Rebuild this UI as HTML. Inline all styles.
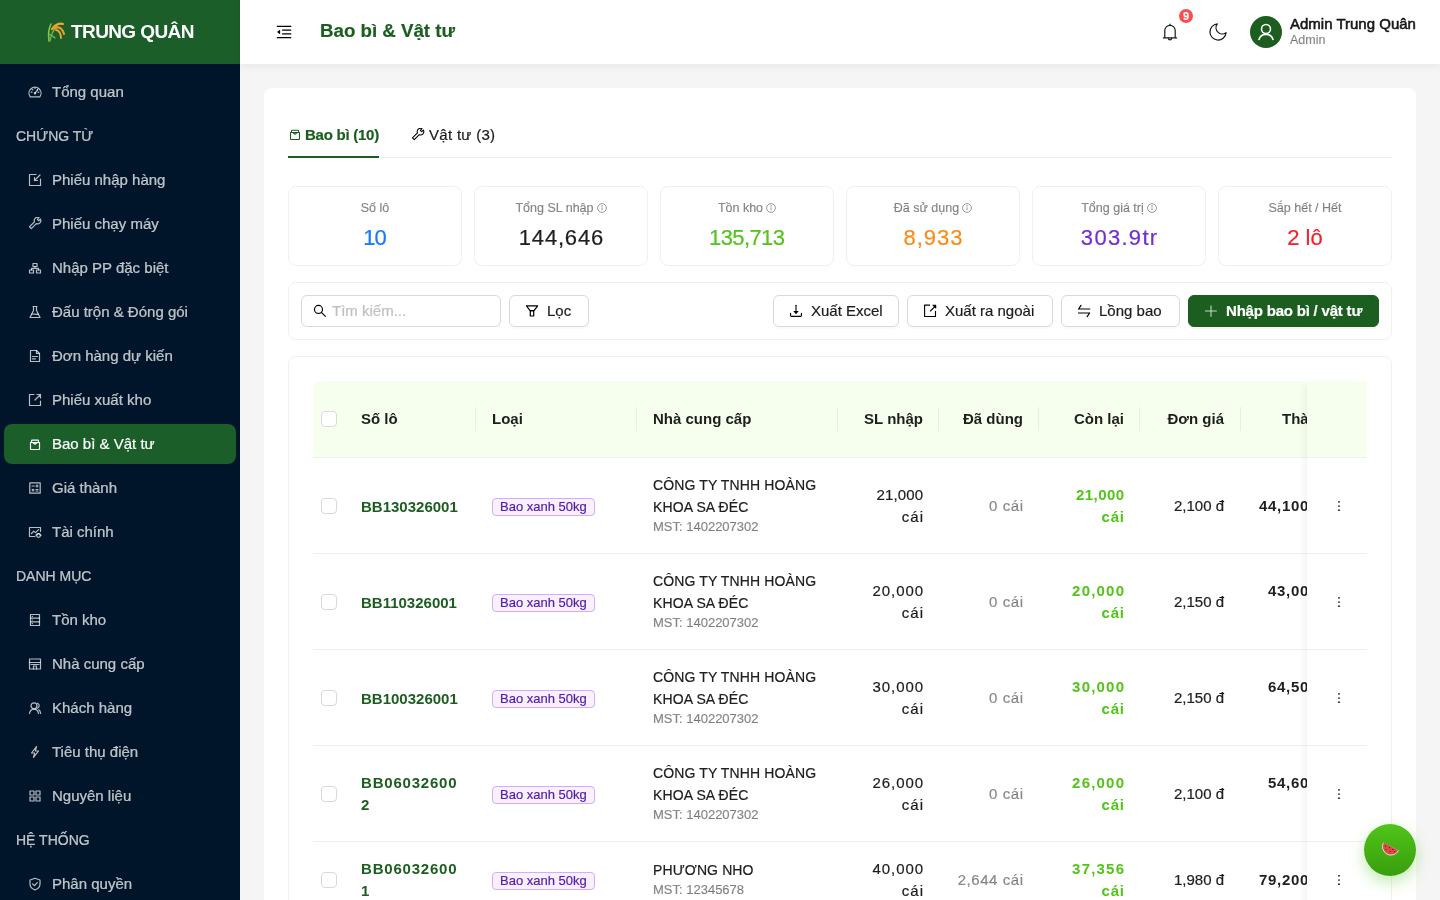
<!DOCTYPE html>
<html lang="vi"><head><meta charset="utf-8"><title>Bao bì &amp; Vật tư</title>
<style>
*{box-sizing:border-box;margin:0;padding:0}
html,body{width:1440px;height:900px;overflow:hidden;background:#f5f5f5;font-family:"Liberation Sans",sans-serif;color:rgba(0,0,0,0.88)}
body{-webkit-text-stroke-width:0.2px}
.bold,.lot,.grn,.th,#logo .t{-webkit-text-stroke-width:0}
.a{position:absolute}
svg{display:block}
#sider{position:absolute;left:0;top:0;width:240px;height:900px;background:#001529;overflow:hidden}
#logo{position:absolute;left:0;top:0;width:240px;height:64px;background:#1b5e2a}
#logo .t{position:absolute;left:71px;top:20px;font-size:19px;font-weight:bold;color:#fff;line-height:24px;white-space:nowrap;letter-spacing:-0.6px}
.mi{position:absolute;left:4px;width:232px;height:40px;border-radius:8px;color:rgba(255,255,255,0.72)}
.mi.sel{background:#1b5e2a;color:#fff}
.mi .mic{position:absolute;left:24px;top:13px;width:14px;height:14px}
.mi .mt{position:absolute;left:48px;top:0;line-height:40px;font-size:15px;white-space:nowrap}
.mg{position:absolute;left:16px;height:40px;line-height:40px;font-size:14px;color:rgba(255,255,255,0.72);white-space:nowrap}
#header{position:absolute;left:240px;top:0;width:1200px;height:64px;background:#fff;box-shadow:0 2px 8px rgba(0,0,0,0.06)}
#card{position:absolute;left:264px;top:88px;width:1152px;height:840px;background:#fff;border-radius:8px}
.tab{position:absolute;top:123px;height:24px;line-height:24px;font-size:15px;white-space:nowrap}
.stat{position:absolute;top:186px;width:174px;height:80px;border:1px solid #f0f0f0;border-radius:8px;text-align:center}
.stat .l{position:absolute;left:0;right:0;top:13px;font-size:12.5px;line-height:16px;color:rgba(0,0,0,0.45);white-space:nowrap}
.stat .v{position:absolute;left:0;right:0;top:37px;font-size:22px;line-height:28px;white-space:nowrap}
.info{display:inline-block;vertical-align:-1px;margin-left:3px}
.box{position:absolute;border:1px solid #f0f0f0;border-radius:8px;background:#fff}
.btn{position:absolute;top:295px;height:32px;border:1px solid #d9d9d9;border-radius:6px;background:#fff;box-shadow:0 2px 0 rgba(0,0,0,0.02);font-size:15px;line-height:30px;white-space:nowrap;color:rgba(0,0,0,0.88)}
.btn .ic{position:absolute;top:8px;width:14px;height:14px}
.btn .tx{position:absolute;top:0}
.th{position:absolute;font-size:15px;font-weight:bold;line-height:22px;white-space:nowrap;color:rgba(0,0,0,0.88)}
.sep{position:absolute;top:407px;width:1px;height:24px;background:#e8eee2}
.cb{position:absolute;width:16px;height:16px;border:1px solid #d9d9d9;border-radius:4px;background:#fff}
.rowline{position:absolute;left:313px;width:994px;height:1px;background:#f0f0f0}
.c{position:absolute;font-size:15px;line-height:22px;white-space:nowrap}
.r{text-align:right}
.lot{color:#1b5e20;font-weight:bold}
.tag{position:absolute;left:492px;height:18px;padding:0 7px;border:1px solid #d3adf7;background:#f9f0ff;color:#531dab;border-radius:4px;font-size:13px;line-height:16px;white-space:nowrap}
.sup{font-size:14px;letter-spacing:0.12px}
.mst{position:absolute;font-size:13px;line-height:16px;color:rgba(0,0,0,0.45);white-space:nowrap}
.gray{color:rgba(0,0,0,0.45)}
.grn{color:#52c41a;font-weight:bold}
.bold{font-weight:bold}
.dots{position:absolute;left:1337px;width:4px}
.tot{letter-spacing:0.7px}
</style></head>
<body>
<div id="root" style="position:absolute;left:0;top:0;width:1440px;height:900px;will-change:transform">
<div id="sider">
<div id="logo">
<svg class="a" style="left:46px;top:20px" width="22" height="22" viewBox="0 0 22 22" fill="none" stroke-linecap="round">
<path d="M3 21 C2 14 3 8 5 4" stroke="#8bc34a" stroke-width="1.6"/>
<path d="M4 21 C5 15 7 10 11 6" stroke="#7cb342" stroke-width="1.4"/>
<path d="M6 9 C9 4 14 3 17 4" stroke="#f0a830" stroke-width="2.2"/>
<path d="M9 8 C13 6 17 9 18 14" stroke="#e89a2a" stroke-width="2.2"/>
<path d="M10 10 C13 10 15 14 15 18" stroke="#f0a830" stroke-width="1.8"/>
<path d="M3 14 C5 15 7 16 9 18" stroke="#66bb6a" stroke-width="1.2"/>
</svg>
<div class="t">TRUNG QUÂN</div>
</div>
<div class="mi" style="top:72px"><span class="mic"><svg width="14" height="14" viewBox="0 0 14 14" stroke="currentColor" fill="none" stroke-width="1.2" stroke-linecap="round" stroke-linejoin="round"><path d="M2.2 11.8 A6 6 0 1 1 11.8 11.8 Z"/><path d="M7 8.2 L9.6 4.8"/><circle cx="7" cy="8.3" r="0.6"/><path d="M7 2.6v0.8M3.2 7.2h0.8M10 7.2h0.8M4.3 4.4l0.5 0.5M9.7 4.4l-0.5 0.5"/></svg></span><span class="mt">Tổng quan</span></div>
<div class="mg" style="top:116px">CHỨNG TỪ</div>
<div class="mi" style="top:160px"><span class="mic"><svg width="14" height="14" viewBox="0 0 14 14" stroke="currentColor" fill="none" stroke-width="1.2" stroke-linecap="round" stroke-linejoin="round"><path d="M8 1.5H1.5v11h11V6"/><path d="M12 2 L6.5 7.5M6.5 4.5v3h3"/></svg></span><span class="mt">Phiếu nhập hàng</span></div>
<div class="mi" style="top:204px"><span class="mic"><svg width="14" height="14" viewBox="0 0 14 14" stroke="currentColor" fill="none" stroke-width="1.2" stroke-linecap="round" stroke-linejoin="round"><path d="M6.46 4.8L1.48 9.78L3.32 11.62L8.3 6.64A3.3 3.3 0 0 0 12.44 2.08L10.77 3.74L9.36 2.33L11.02 0.66A3.3 3.3 0 0 0 6.46 4.8Z"/></svg></span><span class="mt">Phiếu chạy máy</span></div>
<div class="mi" style="top:248px"><span class="mic"><svg width="14" height="14" viewBox="0 0 14 14" stroke="currentColor" fill="none" stroke-width="1.2" stroke-linecap="round" stroke-linejoin="round"><rect x="5" y="2.5" width="4" height="3"/><rect x="1.5" y="9" width="4" height="3"/><rect x="8.5" y="9" width="4" height="3"/><path d="M7 5.5v1.8M3.5 9V7.3h7V9"/></svg></span><span class="mt">Nhập PP đặc biệt</span></div>
<div class="mi" style="top:292px"><span class="mic"><svg width="14" height="14" viewBox="0 0 14 14" stroke="currentColor" fill="none" stroke-width="1.2" stroke-linecap="round" stroke-linejoin="round"><path d="M5 1.5h4M5.5 1.5v4L2 12.5h10L8.5 5.5v-4"/><path d="M3.6 9.2c2-0.8 4.5 0.6 6.8 0"/></svg></span><span class="mt">Đấu trộn &amp; Đóng gói</span></div>
<div class="mi" style="top:336px"><span class="mic"><svg width="14" height="14" viewBox="0 0 14 14" stroke="currentColor" fill="none" stroke-width="1.2" stroke-linecap="round" stroke-linejoin="round"><path d="M2.5 1.5h6l3 3v8h-9z"/><path d="M8.5 1.5v3h3M4.5 7.5h5M4.5 9.8h3"/></svg></span><span class="mt">Đơn hàng dự kiến</span></div>
<div class="mi" style="top:380px"><span class="mic"><svg width="14" height="14" viewBox="0 0 14 14" stroke="currentColor" fill="none" stroke-width="1.2" stroke-linecap="round" stroke-linejoin="round"><path d="M6 1.5H1.5v11h11V8"/><path d="M7 7 L12.5 1.5M9 1.5h3.5V5"/></svg></span><span class="mt">Phiếu xuất kho</span></div>
<div class="mi sel" style="top:424px"><span class="mic"><svg width="14" height="14" viewBox="-1 -1 14 14" stroke="currentColor" fill="none" stroke-width="1.2" stroke-linecap="round" stroke-linejoin="round"><path d="M2.5 4.5V2.9a0.7 0.7 0 0 1 0.7-0.7h5.6a0.7 0.7 0 0 1 0.7 0.7v1.6M1.5 4.5h9v6.3a0.7 0.7 0 0 1-0.7 0.7H2.2a0.7 0.7 0 0 1-0.7-0.7zM3.7 4.6l2.3 1.6 2.3-1.6"/></svg></span><span class="mt">Bao bì &amp; Vật tư</span></div>
<div class="mi" style="top:468px"><span class="mic"><svg width="14" height="14" viewBox="0 0 14 14" stroke="currentColor" fill="none" stroke-width="1.2" stroke-linecap="round" stroke-linejoin="round"><rect x="1.8" y="1.8" width="10.4" height="10.4"/><path d="M4 5h2.2M9 3.9v2.2M7.9 5h2.2M4.2 8.3l1.6 1.6M5.8 8.3l-1.6 1.6M8 8.5h2M8 10h2"/></svg></span><span class="mt">Giá thành</span></div>
<div class="mi" style="top:512px"><span class="mic"><svg width="14" height="14" viewBox="0 0 14 14" stroke="currentColor" fill="none" stroke-width="1.2" stroke-linecap="round" stroke-linejoin="round"><path d="M7 11.5H1.5v-9h11v4"/><path d="M3.5 8.5l2.2-2.4 1.8 1.5 3-3"/><circle cx="10.5" cy="10.5" r="1.8"/><path d="M8 10.5c1.5-2.4 3.5-2.4 5 0"/></svg></span><span class="mt">Tài chính</span></div>
<div class="mg" style="top:556px">DANH MỤC</div>
<div class="mi" style="top:600px"><span class="mic"><svg width="14" height="14" viewBox="0 0 14 14" stroke="currentColor" fill="none" stroke-width="1.2" stroke-linecap="round" stroke-linejoin="round"><rect x="2.5" y="1.5" width="9" height="11"/><path d="M2.5 5.2h9M2.5 8.8h9M4.3 3.4h0.1M4.3 7h0.1M4.3 10.6h0.1"/></svg></span><span class="mt">Tồn kho</span></div>
<div class="mi" style="top:644px"><span class="mic"><svg width="14" height="14" viewBox="0 0 14 14" stroke="currentColor" fill="none" stroke-width="1.2" stroke-linecap="round" stroke-linejoin="round"><path d="M1.5 2h11v10h-11z"/><path d="M1.5 5.5h11M5.5 12V9h3v3M3 7.5h8"/></svg></span><span class="mt">Nhà cung cấp</span></div>
<div class="mi" style="top:688px"><span class="mic"><svg width="14" height="14" viewBox="0 0 14 14" stroke="currentColor" fill="none" stroke-width="1.2" stroke-linecap="round" stroke-linejoin="round"><circle cx="6" cy="4.8" r="3"/><path d="M1.5 12.5c0.5-2.8 2.3-4.3 4.5-4.3s4 1.5 4.5 4.3"/><path d="M9.5 2.2a2.7 2.7 0 0 1 0 5M10.8 8.8c1 0.6 1.6 1.9 1.8 3.7"/></svg></span><span class="mt">Khách hàng</span></div>
<div class="mi" style="top:732px"><span class="mic"><svg width="14" height="14" viewBox="0 0 14 14" stroke="currentColor" fill="none" stroke-width="1.2" stroke-linecap="round" stroke-linejoin="round"><path d="M8.5 1.5 3.5 8h3.2L5.5 12.5l5-6.5H7.3z"/></svg></span><span class="mt">Tiêu thụ điện</span></div>
<div class="mi" style="top:776px"><span class="mic"><svg width="14" height="14" viewBox="0 0 14 14" stroke="currentColor" fill="none" stroke-width="1.2" stroke-linecap="round" stroke-linejoin="round"><rect x="2" y="2" width="4" height="4"/><rect x="8" y="2" width="4" height="4"/><rect x="2" y="8" width="4" height="4"/><rect x="8" y="8" width="4" height="4"/></svg></span><span class="mt">Nguyên liệu</span></div>
<div class="mg" style="top:820px">HỆ THỐNG</div>
<div class="mi" style="top:864px"><span class="mic"><svg width="14" height="14" viewBox="0 0 14 14" stroke="currentColor" fill="none" stroke-width="1.2" stroke-linecap="round" stroke-linejoin="round"><path d="M7 1.3 12 3v4c0 3-2.3 5-5 5.8C4.3 12 2 10 2 7V3z"/><path d="M4.7 7l1.7 1.7 2.9-3"/></svg></span><span class="mt">Phân quyền</span></div>
</div>

<div id="header"></div>
<div class="a" style="left:276px;top:24px;width:16px;height:16px">
<svg width="16" height="16" viewBox="0 0 16 16" fill="none" stroke="#000" stroke-width="1.15" stroke-linecap="round"><path d="M1.3 2.4h13.5M6.5 6.1h8.3M6.5 9.9h8.3M1.3 13.6h13.5"/><path d="M1 8 4.1 5.7v4.6z" fill="#000" stroke="none"/></svg>
</div>
<div class="a" style="left:320px;top:19px;font-size:18.7px;font-weight:bold;color:#1b5e20;line-height:24px;white-space:nowrap">Bao bì &amp; Vật tư</div>
<div class="a" style="left:1162px;top:23px;width:16px;height:18px">
<svg width="16" height="18" viewBox="0 0 16 18" fill="none" stroke="#1a1a1a" stroke-width="1.2" stroke-linejoin="round" stroke-linecap="round"><path d="M2.8 14.6V7.6a5.2 5.2 0 0 1 10.4 0v7"/><path d="M1.4 14.9h13.2"/><path d="M6.4 15.3a1.6 1.6 0 0 0 3.2 0"/><path d="M8 1.1v1.4"/></svg>
</div>
<div class="a" style="left:1179px;top:9px;width:14px;height:14px;border-radius:7px;background:#ff4d4f;color:#fff;font-size:11px;font-weight:bold;text-align:center;line-height:14px">9</div>
<div class="a" style="left:1209px;top:23px;width:18px;height:18px">
<svg width="18" height="18" viewBox="2 2 20 20" fill="none" stroke="#1a1a1a" stroke-width="1.35" stroke-linejoin="round"><path d="M21 12.79A9 9 0 1 1 11.21 3 7 7 0 0 0 21 12.79z"/></svg>
</div>
<div class="a" style="left:1250px;top:16px;width:32px;height:32px;border-radius:16px;background:#1b5e20">
<svg width="32" height="32" viewBox="0 0 32 32" fill="none" stroke="#fff" stroke-width="1.6"><circle cx="16" cy="13" r="4.5"/><path d="M8.8 24c1-3.8 3.8-5.6 7.2-5.6s6.2 1.8 7.2 5.6"/></svg>
</div>
<div class="a" style="left:1290px;top:14px;font-size:15px;line-height:20px;white-space:nowrap;color:rgba(0,0,0,0.88);-webkit-text-stroke:0.55px rgba(0,0,0,0.88)">Admin Trung Quân</div>
<div class="a" style="left:1290px;top:32px;font-size:12.5px;line-height:16px;white-space:nowrap;color:rgba(0,0,0,0.45)">Admin</div>

<div id="card"></div>

<div class="tab" style="left:289px;color:#1b5e20;font-weight:bold"><span class="a" style="left:0;top:5px"><svg width="12" height="13" viewBox="0 0 12 13" fill="none" stroke="#1b5e20" stroke-width="1.1" stroke-linejoin="round"><path d="M2.5 4.5V2.9a0.7 0.7 0 0 1 0.7-0.7h5.6a0.7 0.7 0 0 1 0.7 0.7v1.6M1.5 4.5h9v6.3a0.7 0.7 0 0 1-0.7 0.7H2.2a0.7 0.7 0 0 1-0.7-0.7zM3.7 4.6l2.3 1.6 2.3-1.6"/></svg></span><span class="a" style="left:16px;top:0;letter-spacing:-0.25px">Bao bì (10)</span></div>
<div class="tab" style="left:411px"><span class="a" style="left:0;top:5px"><svg width="14" height="14" viewBox="0 0 14 14" fill="none" stroke="#000" stroke-width="1.05" stroke-linejoin="round"><path d="M6.46 4.8L1.48 9.78L3.32 11.62L8.3 6.64A3.3 3.3 0 0 0 12.44 2.08L10.77 3.74L9.36 2.33L11.02 0.66A3.3 3.3 0 0 0 6.46 4.8Z"/></svg></span><span class="a" style="left:18px;top:0;letter-spacing:0.3px">Vật tư (3)</span></div>
<div class="a" style="left:288px;top:157px;width:1104px;height:1px;background:#f0f0f0"></div>
<div class="a" style="left:288px;top:156px;width:91px;height:2px;background:#1b5e20"></div>

<div class="stat" style="left:288px"><div class="l">Số lô</div><div class="v" style="color:#1677ff"><span style="letter-spacing:-1.2px;margin-right:1.2px">10</span></div></div>
<div class="stat" style="left:474px"><div class="l">Tổng SL nhập<svg class="info" width="10" height="10" viewBox="0 0 10 10" fill="none" stroke="#8c8c8c" stroke-width="0.9"><circle cx="5" cy="5" r="4.4"/><path d="M5 4.3v3"/><circle cx="5" cy="2.9" r="0.3" fill="#8c8c8c"/></svg></div><div class="v" style="color:rgba(0,0,0,0.88)"><span style="letter-spacing:0.8px;margin-right:-0.8px">144,646</span></div></div>
<div class="stat" style="left:660px"><div class="l">Tồn kho<svg class="info" width="10" height="10" viewBox="0 0 10 10" fill="none" stroke="#8c8c8c" stroke-width="0.9"><circle cx="5" cy="5" r="4.4"/><path d="M5 4.3v3"/><circle cx="5" cy="2.9" r="0.3" fill="#8c8c8c"/></svg></div><div class="v" style="color:#52c41a"><span style="letter-spacing:-0.6px;margin-right:0.6px">135,713</span></div></div>
<div class="stat" style="left:846px"><div class="l">Đã sử dụng<svg class="info" width="10" height="10" viewBox="0 0 10 10" fill="none" stroke="#8c8c8c" stroke-width="0.9"><circle cx="5" cy="5" r="4.4"/><path d="M5 4.3v3"/><circle cx="5" cy="2.9" r="0.3" fill="#8c8c8c"/></svg></div><div class="v" style="color:#fa8c16"><span style="letter-spacing:1px;margin-right:-1px">8,933</span></div></div>
<div class="stat" style="left:1032px"><div class="l">Tổng giá trị<svg class="info" width="10" height="10" viewBox="0 0 10 10" fill="none" stroke="#8c8c8c" stroke-width="0.9"><circle cx="5" cy="5" r="4.4"/><path d="M5 4.3v3"/><circle cx="5" cy="2.9" r="0.3" fill="#8c8c8c"/></svg></div><div class="v" style="color:#722ed1"><span style="letter-spacing:1.3px;margin-right:-1.3px">303.9tr</span></div></div>
<div class="stat" style="left:1218px"><div class="l">Sắp hết / Hết</div><div class="v" style="color:#f5222d"><span style="letter-spacing:0px;margin-right:0px">2 lô</span></div></div>


<div class="box" style="left:288px;top:282px;width:1104px;height:58px"></div>
<div class="a" style="left:301px;top:295px;width:200px;height:32px;border:1px solid #d9d9d9;border-radius:6px;background:#fff"></div>
<div class="a" style="left:313px;top:304px"><svg width="14" height="14" viewBox="0 0 14 14" fill="none" stroke="#000" stroke-width="1.15" stroke-linecap="round"><circle cx="5.5" cy="5.4" r="4"/><path d="M8.4 8.4l4 4"/></svg></div>
<div class="a" style="left:332px;top:300px;font-size:15px;line-height:22px;color:#bfbfbf;white-space:nowrap">Tìm kiếm...</div>
<div class="btn" style="left:509px;width:80px"><span class="ic" style="left:16px"><svg width="14" height="14" viewBox="0 0 14 14" fill="none" stroke="#000" stroke-width="1.2" stroke-linejoin="round"><path d="M0.4 1.8h11.3L8 6.7H4.1z"/><path d="M4.3 6.7h3.4v5.3H4.3z"/></svg></span><span class="tx" style="left:37px">Lọc</span></div>
<div class="btn" style="left:773px;width:126px"><span class="ic" style="left:16px"><svg width="14" height="14" viewBox="0 0 14 14" fill="none" stroke="#000" stroke-width="1.1" stroke-linecap="round"><path d="M6 1.3v7"/><path d="M4.5 7.6h3L6 9.3z" fill="#000"/><path d="M0.6 9.2v2.4a0.8 0.8 0 0 0 0.8 0.8h9.2a0.8 0.8 0 0 0 0.8-0.8V9.2"/></svg></span><span class="tx" style="left:37px">Xuất Excel</span></div>
<div class="btn" style="left:907px;width:146px"><span class="ic" style="left:16px"><svg width="14" height="14" viewBox="0 0 14 14" fill="none" stroke="#000" stroke-width="1.1" stroke-linecap="round" stroke-linejoin="round"><path d="M5.6 1.1H0.6v11.4h10.9V7.2"/><path d="M6.4 7L10.8 2.6"/><path d="M9 1.2h2.7v2.7z" fill="#000"/></svg></span><span class="tx" style="left:37px">Xuất ra ngoài</span></div>
<div class="btn" style="left:1061px;width:119px"><span class="ic" style="left:16px"><svg width="14" height="14" viewBox="0 0 14 14" fill="none" stroke="#000" stroke-width="1.2" stroke-linecap="round" stroke-linejoin="round"><path d="M0.6 5h11.2M0.6 5l2.4-3.6M11.6 9H0.4M11.6 9l-2.4 3.6"/></svg></span><span class="tx" style="left:37px">Lồng bao</span></div>
<div class="btn" style="left:1188px;width:191px;background:#1b5e20;border-color:#1b5e20;color:#fff;font-weight:bold;box-shadow:0 2px 0 rgba(0,0,0,0.04)"><span class="ic" style="left:16px"><svg width="14" height="14" viewBox="0 0 14 14" fill="none" stroke="rgba(255,255,255,0.75)" stroke-width="1.1"><path d="M6 1.4v11.4M0 7h11.8"/></svg></span><span class="tx" style="left:37px;letter-spacing:-0.2px">Nhập bao bì / vật tư</span></div>


<div class="box" style="left:288px;top:356px;width:1104px;height:600px"></div>
<div class="a" style="left:313px;top:381px;width:1054px;height:77px;background:#f6ffed;border-radius:8px 8px 0 0"></div>
<div class="a" style="left:313px;top:457px;width:1054px;height:1px;background:#f0f0f0"></div>
<div class="cb" style="left:321px;top:411px"></div>
<div class="th" style="left:361px;top:408px">Số lô</div>
<div class="th" style="left:492px;top:408px">Loại</div>
<div class="th" style="left:653px;top:408px">Nhà cung cấp</div>
<div class="th r" style="right:517px;top:408px">SL nhập</div>
<div class="th r" style="right:417px;top:408px">Đã dùng</div>
<div class="th r" style="right:316px;top:408px">Còn lại</div>
<div class="th r" style="right:216px;top:408px">Đơn giá</div>
<div class="th" style="left:1282px;top:408px">Thành tiền</div>
<div class="sep" style="left:475px"></div><div class="sep" style="left:636px"></div><div class="sep" style="left:837px"></div><div class="sep" style="left:938px"></div><div class="sep" style="left:1038px"></div><div class="sep" style="left:1139px"></div><div class="sep" style="left:1240px"></div>
<div class="rowline" style="top:553px"></div><div class="cb" style="left:321px;top:498px"></div><div class="c lot" style="left:361px;top:496px;letter-spacing:0px">BB130326001</div><div class="tag" style="top:498px">Bao xanh 50kg</div><div class="c sup" style="left:653px;top:474px">CÔNG TY TNHH HOÀNG<br>KHOA SA ĐÉC</div><div class="mst" style="left:653px;top:519px">MST: 1402207302</div><div class="c r" style="right:517px;top:484px"><span style="letter-spacing:0.10px;margin-right:-0.10px">21,000</span><br><span style="letter-spacing:1.0px;margin-right:-1.0px">cái</span></div><div class="c r gray" style="right:417px;top:495px"><span style="letter-spacing:0.55px;margin-right:-0.55px">0 cái</span></div><div class="c r grn" style="right:316px;top:484px"><span style="letter-spacing:0.40px;margin-right:-0.40px">21,000</span><br><span style="letter-spacing:0.8px;margin-right:-0.8px">cái</span></div><div class="c r" style="right:216px;top:495px">2,100 đ</div><div class="c bold tot" style="left:1259px;top:495px">44,100,000 đ</div>
<div class="rowline" style="top:649px"></div><div class="cb" style="left:321px;top:594px"></div><div class="c lot" style="left:361px;top:592px;letter-spacing:0px">BB110326001</div><div class="tag" style="top:594px">Bao xanh 50kg</div><div class="c sup" style="left:653px;top:570px">CÔNG TY TNHH HOÀNG<br>KHOA SA ĐÉC</div><div class="mst" style="left:653px;top:615px">MST: 1402207302</div><div class="c r" style="right:517px;top:580px"><span style="letter-spacing:0.90px;margin-right:-0.90px">20,000</span><br><span style="letter-spacing:1.0px;margin-right:-1.0px">cái</span></div><div class="c r gray" style="right:417px;top:591px"><span style="letter-spacing:0.55px;margin-right:-0.55px">0 cái</span></div><div class="c r grn" style="right:316px;top:580px"><span style="letter-spacing:1.20px;margin-right:-1.20px">20,000</span><br><span style="letter-spacing:0.8px;margin-right:-0.8px">cái</span></div><div class="c r" style="right:216px;top:591px">2,150 đ</div><div class="c bold tot" style="left:1268px;top:580px">43,000,000</div>
<div class="rowline" style="top:745px"></div><div class="cb" style="left:321px;top:690px"></div><div class="c lot" style="left:361px;top:688px;letter-spacing:0px">BB100326001</div><div class="tag" style="top:690px">Bao xanh 50kg</div><div class="c sup" style="left:653px;top:666px">CÔNG TY TNHH HOÀNG<br>KHOA SA ĐÉC</div><div class="mst" style="left:653px;top:711px">MST: 1402207302</div><div class="c r" style="right:517px;top:676px"><span style="letter-spacing:0.90px;margin-right:-0.90px">30,000</span><br><span style="letter-spacing:1.0px;margin-right:-1.0px">cái</span></div><div class="c r gray" style="right:417px;top:687px"><span style="letter-spacing:0.55px;margin-right:-0.55px">0 cái</span></div><div class="c r grn" style="right:316px;top:676px"><span style="letter-spacing:1.20px;margin-right:-1.20px">30,000</span><br><span style="letter-spacing:0.8px;margin-right:-0.8px">cái</span></div><div class="c r" style="right:216px;top:687px">2,150 đ</div><div class="c bold tot" style="left:1268px;top:676px">64,500,000</div>
<div class="rowline" style="top:841px"></div><div class="cb" style="left:321px;top:786px"></div><div class="c lot" style="left:361px;top:772px;letter-spacing:0.8px">BB06032600<br>2</div><div class="tag" style="top:786px">Bao xanh 50kg</div><div class="c sup" style="left:653px;top:762px">CÔNG TY TNHH HOÀNG<br>KHOA SA ĐÉC</div><div class="mst" style="left:653px;top:807px">MST: 1402207302</div><div class="c r" style="right:517px;top:772px"><span style="letter-spacing:0.90px;margin-right:-0.90px">26,000</span><br><span style="letter-spacing:1.0px;margin-right:-1.0px">cái</span></div><div class="c r gray" style="right:417px;top:783px"><span style="letter-spacing:0.55px;margin-right:-0.55px">0 cái</span></div><div class="c r grn" style="right:316px;top:772px"><span style="letter-spacing:1.20px;margin-right:-1.20px">26,000</span><br><span style="letter-spacing:0.8px;margin-right:-0.8px">cái</span></div><div class="c r" style="right:216px;top:783px">2,100 đ</div><div class="c bold tot" style="left:1268px;top:772px">54,600,000</div>
<div class="rowline" style="top:937px"></div><div class="cb" style="left:321px;top:872px"></div><div class="c lot" style="left:361px;top:858px;letter-spacing:0.8px">BB06032600<br>1</div><div class="tag" style="top:872px">Bao xanh 50kg</div><div class="c sup" style="left:653px;top:859px">PHƯƠNG NHO</div><div class="mst" style="left:653px;top:882px">MST: 12345678</div><div class="c r" style="right:517px;top:858px"><span style="letter-spacing:0.90px;margin-right:-0.90px">40,000</span><br><span style="letter-spacing:1.0px;margin-right:-1.0px">cái</span></div><div class="c r gray" style="right:417px;top:869px"><span style="letter-spacing:0.55px;margin-right:-0.55px">2,644 cái</span></div><div class="c r grn" style="right:316px;top:858px"><span style="letter-spacing:1.20px;margin-right:-1.20px">37,356</span><br><span style="letter-spacing:0.8px;margin-right:-0.8px">cái</span></div><div class="c r" style="right:216px;top:869px">1,980 đ</div><div class="c bold tot" style="left:1259px;top:869px">79,200,000 đ</div>

<div class="a" style="left:1307px;top:381px;width:60px;height:600px;background:#fff;box-shadow:-6px 0 8px -4px rgba(0,0,0,0.06)"></div><div class="a" style="left:1307px;top:381px;width:60px;height:77px;background:#f6ffed"></div><div class="a" style="left:1307px;top:457px;width:60px;height:1px;background:#f0f0f0"></div><div class="a" style="left:1307px;top:553px;width:60px;height:1px;background:#f0f0f0"></div><div class="a" style="left:1337px;top:499px"><svg width="4" height="14" viewBox="0 0 4 14" fill="#000"><circle cx="2" cy="2.8" r="0.85"/><circle cx="2" cy="7" r="0.85"/><circle cx="2" cy="11.2" r="0.85"/></svg></div><div class="a" style="left:1307px;top:649px;width:60px;height:1px;background:#f0f0f0"></div><div class="a" style="left:1337px;top:595px"><svg width="4" height="14" viewBox="0 0 4 14" fill="#000"><circle cx="2" cy="2.8" r="0.85"/><circle cx="2" cy="7" r="0.85"/><circle cx="2" cy="11.2" r="0.85"/></svg></div><div class="a" style="left:1307px;top:745px;width:60px;height:1px;background:#f0f0f0"></div><div class="a" style="left:1337px;top:691px"><svg width="4" height="14" viewBox="0 0 4 14" fill="#000"><circle cx="2" cy="2.8" r="0.85"/><circle cx="2" cy="7" r="0.85"/><circle cx="2" cy="11.2" r="0.85"/></svg></div><div class="a" style="left:1307px;top:841px;width:60px;height:1px;background:#f0f0f0"></div><div class="a" style="left:1337px;top:787px"><svg width="4" height="14" viewBox="0 0 4 14" fill="#000"><circle cx="2" cy="2.8" r="0.85"/><circle cx="2" cy="7" r="0.85"/><circle cx="2" cy="11.2" r="0.85"/></svg></div><div class="a" style="left:1307px;top:937px;width:60px;height:1px;background:#f0f0f0"></div><div class="a" style="left:1337px;top:873px"><svg width="4" height="14" viewBox="0 0 4 14" fill="#000"><circle cx="2" cy="2.8" r="0.85"/><circle cx="2" cy="7" r="0.85"/><circle cx="2" cy="11.2" r="0.85"/></svg></div>
<div class="a" style="left:1364px;top:824px;width:52px;height:52px;border-radius:26px;background:linear-gradient(180deg,#52c41a,#389e0d);box-shadow:0 6px 16px rgba(82,196,26,0.35)">
<svg class="a" style="left:0;top:0" width="52" height="52" viewBox="0 0 52 52"><g transform="rotate(27 27 22.5)"><path d="M17.3 22.5A9.7 9.7 0 0 0 36.7 22.5Z" fill="#5aa02c"/><path d="M18.1 22.5A8.9 8.9 0 0 0 35.9 22.5Z" fill="#eef3d2"/><path d="M18.9 22.5A8.1 8.1 0 0 0 35.1 22.5Z" fill="#dc4a48"/><g fill="#4a2a22"><circle cx="22" cy="24.5" r="0.6"/><circle cx="26" cy="24" r="0.6"/><circle cx="30" cy="24.5" r="0.6"/><circle cx="24" cy="27.6" r="0.6"/><circle cx="28.5" cy="27.6" r="0.6"/><circle cx="32.5" cy="25.5" r="0.6"/></g></g></svg>
</div>
</div>
</body></html>
